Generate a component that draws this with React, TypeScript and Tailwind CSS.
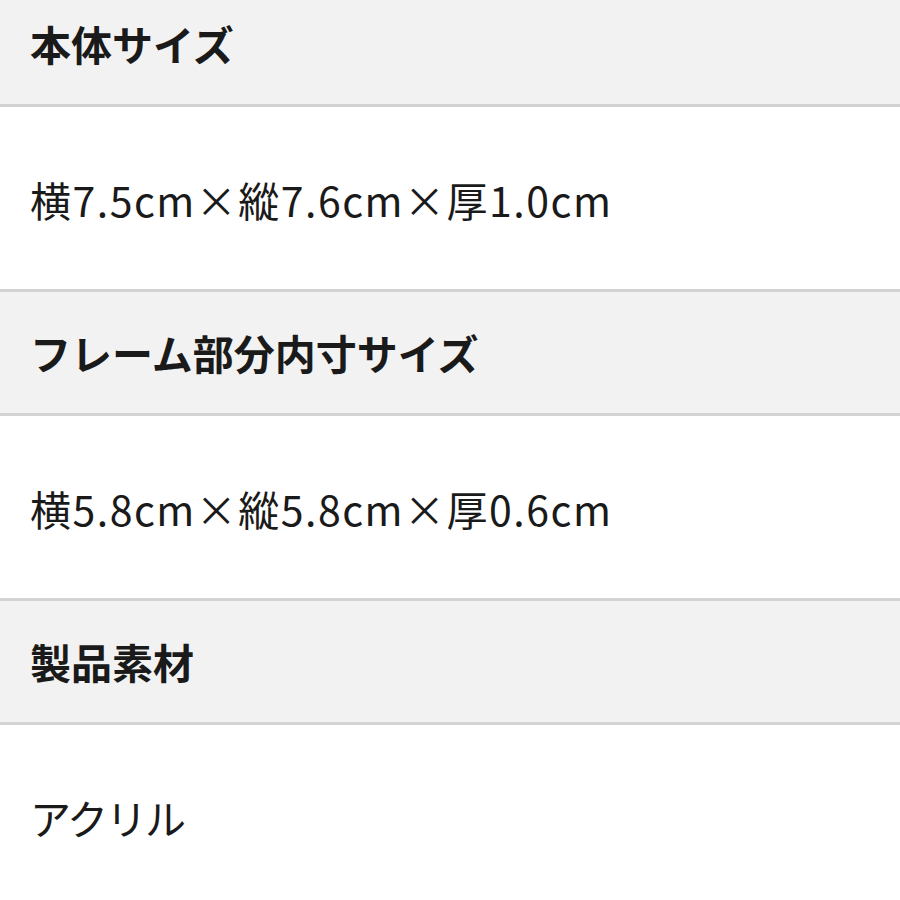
const specs = [
  { label: "本体サイズ", value: "横7.5cm×縱7.6cm×厚1.0cm", tracking: "tracking-[1.5px]" },
  { label: "フレーム部分内寸サイズ", value: "横5.8cm×縱5.8cm×厚0.6cm", tracking: "tracking-[1.5px]" },
  { label: "製品素材", value: "アクリル", tracking: "tracking-[-2px]" },
];

export default function App() {
  return (
    <div
      className="w-[900px] h-[900px] overflow-hidden bg-white text-[#1a1a1a]"
      style={{ fontFamily: '"Noto Sans CJK JP", "Noto Sans", sans-serif' }}
    >
      <div className="-mt-[17px]">
        {specs.map((s) => (
          <div key={s.label}>
            <div className="h-[124px] flex items-center px-[30px] bg-[#f2f2f2] border-b-[3px] border-[#d3d3d3] text-[41px] font-semibold leading-none">
              {s.label}
            </div>
            <div
              className={
                "h-[185px] flex items-center px-[30px] pt-[3px] bg-white border-b-[3px] border-[#d3d3d3] text-[41px] leading-none " +
                s.tracking
              }
            >
              {s.value}
            </div>
          </div>
        ))}
      </div>
    </div>
  );
}
